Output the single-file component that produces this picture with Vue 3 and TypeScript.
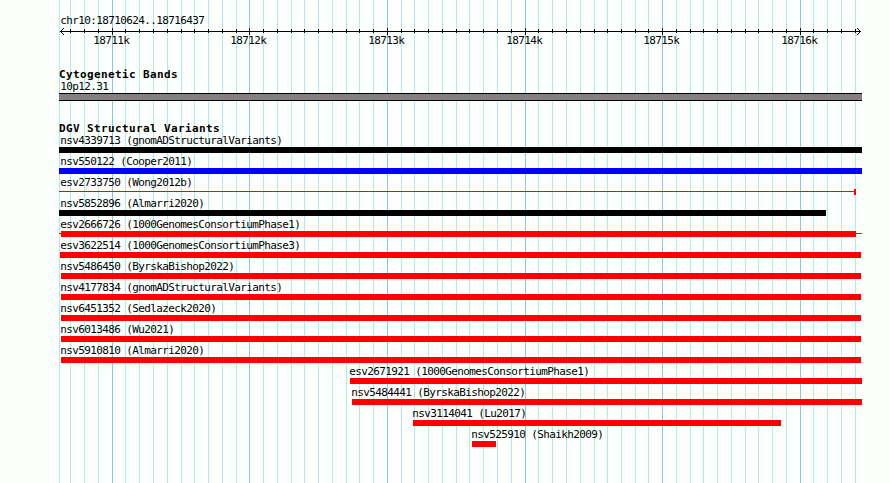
<script setup lang="ts">
interface Variant {
    name: string
    study: string
    start: number
    end: number
    color: string
    labelX: number
    lineEnd?: number
}

const gridLines = [
    59, 70, 84, 98, 112, 125, 139, 153, 167, 181, 194, 208, 222, 236, 249,
    263, 277, 291, 304, 318, 332, 346, 359, 373, 387, 401, 414, 428, 442, 456,
    469, 483, 497, 511, 525, 538, 552, 566, 580, 594, 607, 621, 635, 648, 662,
    676, 690, 703, 717, 731, 745, 758, 772, 786, 800, 813, 827, 841, 855
];

const majors = [
    { x: 112, label: '18711k' },
    { x: 249, label: '18712k' },
    { x: 387, label: '18713k' },
    { x: 525, label: '18714k' },
    { x: 662, label: '18715k' },
    { x: 800, label: '18716k' }
];

const isMajor = (x: number) => majors.some(m => m.x === x);

const variants: Variant[] = [
    { name: 'nsv4339713', study: 'gnomADStructuralVariants', start: 59, end: 862, color: 'black', labelX: 60 },
    { name: 'nsv550122', study: 'Cooper2011', start: 59, end: 862, color: 'blue', labelX: 60 },
    { name: 'esv2733750', study: 'Wong2012b', start: 854, end: 856, color: 'red', labelX: 60, lineEnd: 856 },
    { name: 'nsv5852896', study: 'Almarri2020', start: 59, end: 826, color: 'black', labelX: 60 },
    { name: 'esv2666726', study: '1000GenomesConsortiumPhase1', start: 61, end: 856, color: 'red', labelX: 60, lineEnd: 862 },
    { name: 'esv3622514', study: '1000GenomesConsortiumPhase3', start: 60, end: 861, color: 'red', labelX: 60 },
    { name: 'nsv5486450', study: 'ByrskaBishop2022', start: 61, end: 861, color: 'red', labelX: 60 },
    { name: 'nsv4177834', study: 'gnomADStructuralVariants', start: 61, end: 861, color: 'red', labelX: 60 },
    { name: 'nsv6451352', study: 'Sedlazeck2020', start: 61, end: 861, color: 'red', labelX: 60 },
    { name: 'nsv6013486', study: 'Wu2021', start: 61, end: 861, color: 'red', labelX: 60 },
    { name: 'nsv5910810', study: 'Almarri2020', start: 61, end: 861, color: 'red', labelX: 60 },
    { name: 'esv2671921', study: '1000GenomesConsortiumPhase1', start: 350, end: 862, color: 'red', labelX: 349 },
    { name: 'nsv5484441', study: 'ByrskaBishop2022', start: 352, end: 862, color: 'red', labelX: 351 },
    { name: 'nsv3114041', study: 'Lu2017', start: 413, end: 781, color: 'red', labelX: 412 },
    { name: 'nsv525910', study: 'Shaikh2009', start: 472, end: 496, color: 'red', labelX: 471 }
];
</script>

<template>
    <div class="browser">
        <svg class="grid" width="890" height="483" shape-rendering="crispEdges">
            <rect v-for="x in gridLines" :key="x" :x="x" y="0" width="1" height="483" :class="isMajor(x) ? 'major' : 'minor'" />
        </svg>

        <header class="ruler">
            <div class="label">chr10:18710624..18716437</div>
            <svg class="axis" width="890" height="20" shape-rendering="crispEdges">
                <rect x="60" y="4" width="801" height="1" />
                <rect v-for="x in gridLines.slice(1)" :key="x" :x="x" :y="isMajor(x) ? 1 : 2" width="1" :height="isMajor(x) ? 7 : 4" />
                <path d="M60 4h1v1h-1zM61 3h1v3h-1zM62 2h1v1h-1zM62 6h1v1h-1zM63 1h1v1h-1zM63 7h1v1h-1z" />
                <path d="M860 4h1v1h-1zM859 3h1v3h-1zM858 2h1v1h-1zM858 6h1v1h-1zM857 1h1v1h-1zM857 7h1v1h-1z" />
                <text v-for="m in majors" :key="m.label" :x="m.x - 18.8" y="17">{{ m.label }}</text>
            </svg>
        </header>

        <section class="bands">
            <h2>Cytogenetic Bands</h2>
            <div class="label">10p12.31</div>
            <div class="band"></div>
        </section>

        <section class="variants">
            <h2>DGV Structural Variants</h2>
            <div v-for="v in variants" :key="v.name" class="variant">
                <div class="label" :style="{ marginLeft: v.labelX + 'px' }">{{ v.name }} ({{ v.study }})</div>
                <div class="track" :class="{ line: v.lineEnd }" :style="v.lineEnd ? { backgroundSize: (v.lineEnd - 59) + 'px 1px' } : {}">
                    <div class="bar" :style="{ marginLeft: v.start + 'px', width: (v.end - v.start) + 'px', background: v.color }"></div>
                </div>
            </div>
        </section>
    </div>
</template>

<style>
body {
    margin: 0;
    background: #fdfffc;
}
</style>

<style scoped>
.browser {
    position: relative;
    width: 890px;
    height: 483px;
    overflow: hidden;
    background: #fdfffc;
    color: #000;
    font-family: 'DejaVu Sans Mono', monospace;
    font-size: 11px;
    letter-spacing: -0.622px;
}

.grid {
    position: absolute;
    inset: 0;
}

.grid .minor {
    fill: #aaeeea;
}

.grid .major {
    fill: #82cae9;
}

.ruler,
.bands,
.variants {
    position: relative;
}

.ruler {
    height: 68px;
    padding-top: 14px;
    box-sizing: border-box;
}

.label {
    height: 13px;
    margin-left: 60px;
    padding-left: 0.3px;
    line-height: 13px;
    white-space: pre;
}

.axis {
    display: block;
}

h2 {
    height: 12px;
    margin: 0 0 0 59px;
    font-size: 11px;
    line-height: 14px;
    letter-spacing: 0.378px;
    white-space: pre;
}

.bands {
    height: 54px;
}

.band {
    width: 803px;
    height: 8px;
    margin-left: 59px;
    box-sizing: border-box;
    border: solid #000;
    border-width: 1px 0;
    background: #848082;
}

.variant {
    height: 21px;
}

.track {
    display: flex;
    height: 6px;
}

.track.line {
    background: linear-gradient(#e01010, #e01010) 59px 2px / 803px 1px no-repeat;
}
</style>
